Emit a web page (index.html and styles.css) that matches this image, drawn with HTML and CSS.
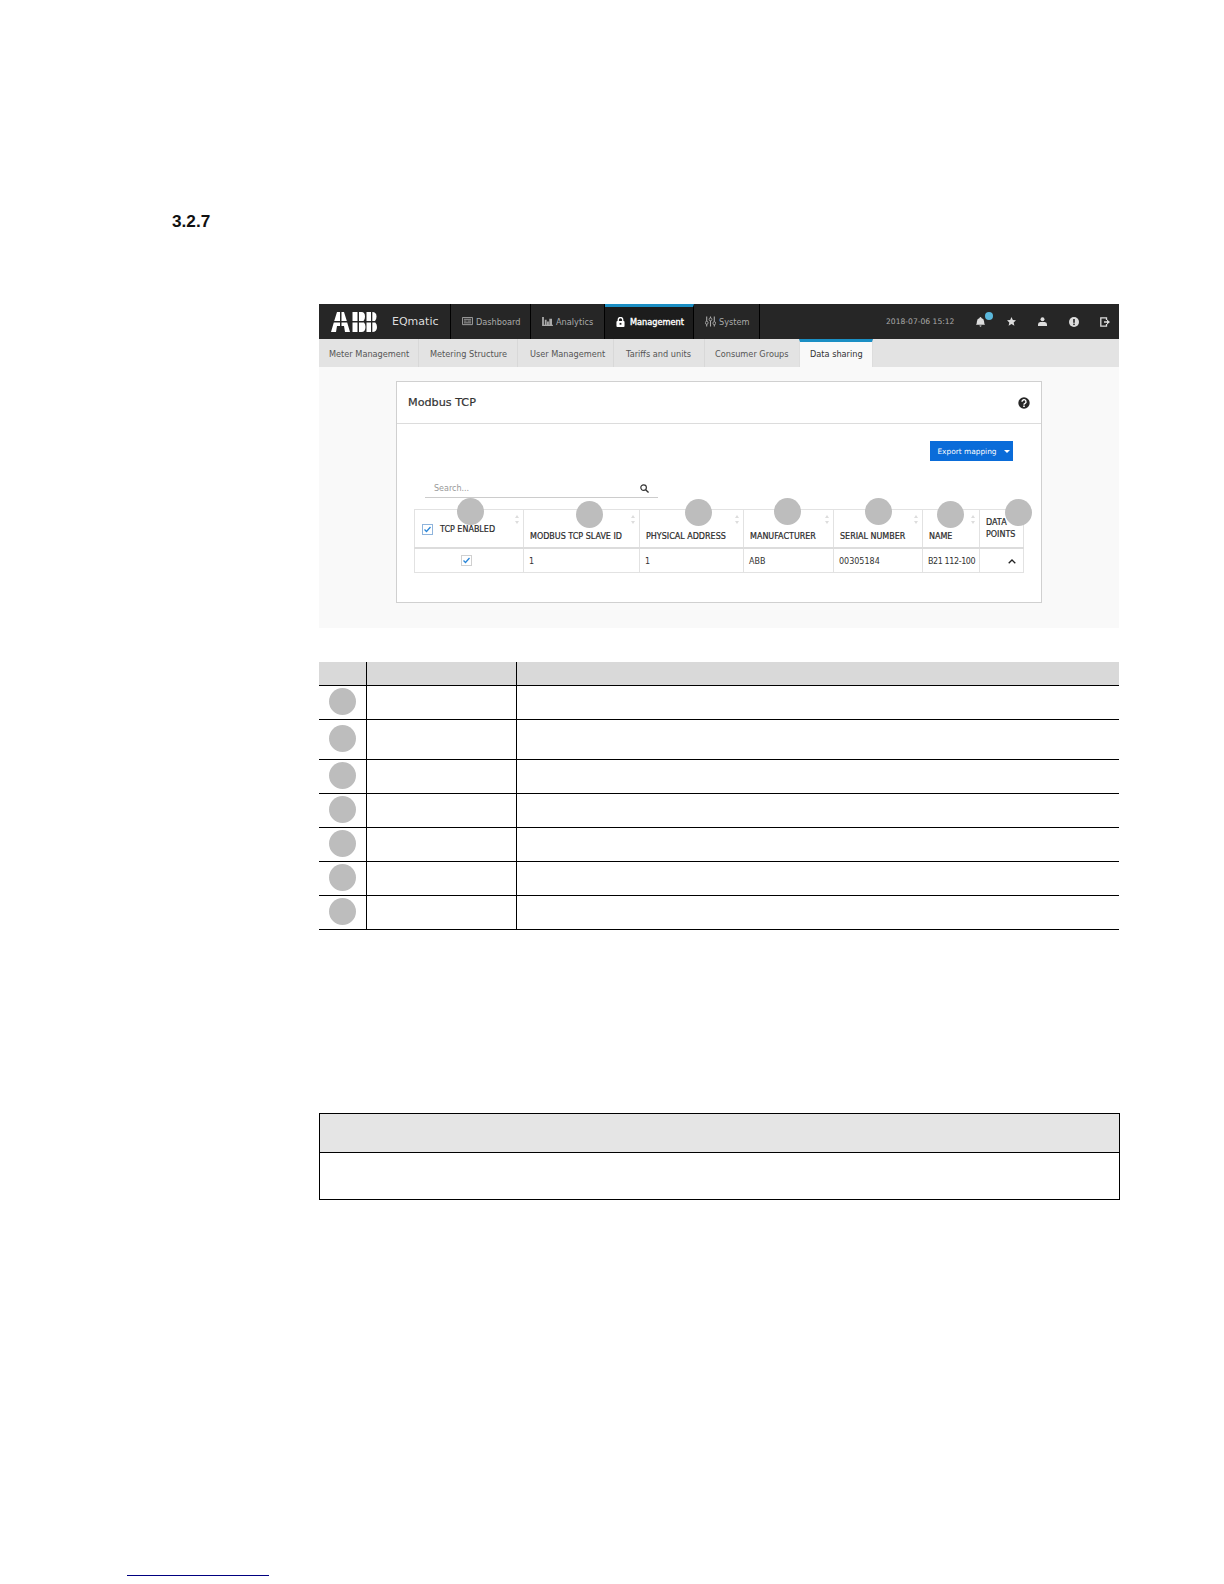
FILE: index.html
```html
<!DOCTYPE html>
<html lang="en">
<head>
<meta charset="utf-8">
<title>3.2.7 Modbus TCP</title>
<link rel="stylesheet" href="styles.css">
</head>
<body>
<div class="page">
  <h2 class="section-no">3.2.7</h2>

  <div class="screen">
    <header class="nav">
      <div class="brand">
        <svg class="logo" viewBox="0 0 46 20" width="46" height="20" aria-label="ABB logo">
          <g fill="#fff">
            <polygon points="3.200,9 6,0 9,0 9,9"/>
            <polygon points="2.800,10.500 9,10.500 9,14 6,14 5,20 0,20"/>
            <polygon points="10.500,0 13,0 15.800,9 10.500,9"/>
            <polygon points="10.500,10.500 16.200,10.500 19,20 14,20 13,14 10.500,14"/>
            <rect x="21.500" y="0" width="5" height="9"/>
            <rect x="21.500" y="10.500" width="5" height="9.500"/>
            <path d="M28 0h2.500q3.500 0 3.500 4.500 0 3-1.500 4.500H28z"/>
            <path d="M28 10.500h5q1.500 1.500 1.500 4.500 0 5-4 5H28z"/>
            <rect x="35.500" y="0" width="4.500" height="9"/>
            <rect x="35.500" y="10.500" width="4.500" height="9.500"/>
            <path d="M41.300 0q4.200 0 4.200 4.500 0 3-1.500 4.500h-2.700z"/>
            <path d="M41.300 10.500h3q1.700 1.500 1.700 4.500 0 5-4.700 5z"/>
          </g>
        </svg>
        <span class="product">EQmatic</span>
      </div>
      <a class="nav-item nav-dash">
        <svg class="nav-ico" viewBox="0 0 12 10" width="11" height="9"><path d="M.5.500h11v8h-11z" fill="none" stroke="#aaa"/><path d="M2 2.500h8M2 4.500h3M6 4.500h4M2 6.500h8" stroke="#aaa"/></svg>
        Dashboard
      </a>
      <a class="nav-item nav-ana">
        <svg class="nav-ico" viewBox="0 0 12 10" width="11" height="9"><path d="M0 0h2v10H0zM3 3h2v6H3zM5.500 5h2v4h-2zM8 2h3v7H8zM0 8.500h12V10H0z" fill="#aaa"/></svg>
        Analytics
      </a>
      <a class="nav-item nav-mgmt">
        <svg class="nav-ico" viewBox="0 0 10 11" width="9" height="10"><path d="M2.500 5V3a2.500 2.500 0 0 1 5 0v2" fill="none" stroke="#fff" stroke-width="1.500"/><rect x="0.500" y="4.500" width="9" height="6.500" rx="1" fill="#fff"/><rect x="4" y="6.500" width="2" height="2" fill="#1c1c1c"/></svg>
        Management
      </a>
      <a class="nav-item nav-sys">
        <svg class="nav-ico" viewBox="0 0 13 12" width="11" height="11"><path d="M2 0v12M6.500 0v12M11 0v12" stroke="#aaa" stroke-width="1.300"/><circle cx="2" cy="7.500" r="1.700" fill="#262626" stroke="#aaa"/><circle cx="6.500" cy="3.500" r="1.700" fill="#262626" stroke="#aaa"/><circle cx="11" cy="8" r="1.700" fill="#262626" stroke="#aaa"/></svg>
        System
      </a>
      <div class="nav-right">
        <span class="date">2018-07-06 15:12</span>
        <span class="tool tool-bell">
          <svg viewBox="0 0 10 11" width="9" height="10"><path d="M5 0a1 1 0 0 1 1 1q3 1 3 4 0 2.500 1 3.500H0q1-1 1-3.500 0-3 3-4a1 1 0 0 1 1-1zM3.800 9.500h2.400a1.200 1.200 0 0 1-2.400 0z" fill="#ddd"/></svg>
          <i class="badge"></i>
        </span>
        <span class="tool">
          <svg viewBox="0 0 10 10" width="9" height="9"><path d="M5 0l1.500 3.300 3.500.4-2.600 2.300.8 3.600L5 7.800 1.800 9.600l.8-3.600L0 3.700l3.500-.4z" fill="#ddd"/></svg>
        </span>
        <span class="tool">
          <svg viewBox="0 0 10 10" width="9" height="9"><circle cx="5" cy="2.500" r="2.200" fill="#ddd"/><path d="M0 10V8q0-2 2.500-2.500h5Q10 6 10 8v2z" fill="#ddd"/></svg>
        </span>
        <span class="tool">
          <svg viewBox="0 0 10 10" width="10" height="10"><circle cx="5" cy="5" r="5" fill="#ddd"/><rect x="4.200" y="2" width="1.600" height="3.800" fill="#262626"/><rect x="4.200" y="6.600" width="1.600" height="1.500" fill="#262626"/></svg>
        </span>
        <span class="tool">
          <svg viewBox="0 0 10 10" width="10" height="10"><path d="M6.500 3V.800H.8v8.400h5.700V7" fill="none" stroke="#ddd" stroke-width="1.300"/><path d="M4 4.200h3V2.500L10 5 7 7.500V5.800H4z" fill="#ddd"/></svg>
        </span>
      </div>
    </header>

    <nav class="tabs">
      <a class="tab tab-1">Meter Management</a>
      <a class="tab tab-2">Metering Structure</a>
      <a class="tab tab-3">User Management</a>
      <a class="tab tab-4">Tariffs and units</a>
      <a class="tab tab-5">Consumer Groups</a>
      <a class="tab tab-active">Data sharing</a>
    </nav>

    <section class="card">
      <div class="card-head">
        <h3 class="card-title">Modbus TCP</h3>
        <svg viewBox="0 0 12 12" width="12" height="12" aria-label="Help"><circle cx="6" cy="6" r="5.700" fill="#262626"/><path d="M4 4.700a2 2 0 1 1 3 1.700q-1 .5-1 1.300" fill="none" stroke="#fff" stroke-width="1.400"/><rect x="5.200" y="8.500" width="1.600" height="1.500" fill="#fff"/></svg>
      </div>
      <div class="card-actions">
        <button class="export">Export mapping <i class="caret"></i></button>
      </div>
      <div class="search">
        <span>Search...</span>
        <svg viewBox="0 0 10 10" width="9" height="9"><circle cx="4" cy="4" r="3.100" fill="none" stroke="#333" stroke-width="1.300"/><path d="M6.300 6.300L9.500 9.500" stroke="#333" stroke-width="1.500"/></svg>
      </div>
      <table class="data">
        <colgroup>
          <col class="d1"><col class="d2"><col class="d3"><col class="d4"><col class="d5"><col class="d6"><col class="d7">
        </colgroup>
        <thead>
          <tr>
            <th class="th-check">
              <span class="th-check-in">
                <svg class="cb" viewBox="0 0 11 11" width="11" height="11"><rect x=".5" y=".5" width="10" height="10" fill="#fff" stroke="#8fb4dc"/><path d="M2.500 5.500l2 2 4-4.500" fill="none" stroke="#2a86d8" stroke-width="1.300"/></svg>
                TCP ENABLED
              </span>
              <i class="sort"></i>
            </th>
            <th>MODBUS TCP SLAVE ID<i class="sort"></i></th>
            <th>PHYSICAL ADDRESS<i class="sort"></i></th>
            <th>MANUFACTURER<i class="sort"></i></th>
            <th>SERIAL NUMBER<i class="sort"></i></th>
            <th>NAME<i class="sort"></i></th>
            <th class="th-two">DATA<br>POINTS</th>
          </tr>
        </thead>
        <tbody>
          <tr>
            <td class="td-check"><svg class="cb" viewBox="0 0 11 11" width="11" height="11"><rect x=".5" y=".5" width="10" height="10" fill="#fff" stroke="#d0d0d0"/><path d="M2.500 5.500l2 2 4-4.500" fill="none" stroke="#2a86d8" stroke-width="1.300"/></svg></td>
            <td>1</td>
            <td>1</td>
            <td>ABB</td>
            <td>00305184</td>
            <td class="td-name">B21 112-100</td>
            <td class="td-chev"><svg viewBox="0 0 8 5" width="8" height="5"><path d="M.7 4.300L4 1l3.300 3.300" fill="none" stroke="#222" stroke-width="1.300"/></svg></td>
          </tr>
        </tbody>
      </table>
    </section>

    <i class="dot pin p1"></i>
    <i class="dot pin p2"></i>
    <i class="dot pin p3"></i>
    <i class="dot pin p4"></i>
    <i class="dot pin p5"></i>
    <i class="dot pin p6"></i>
    <i class="dot pin p7"></i>
  </div>

  <table class="legend">
    <colgroup><col class="l1"><col class="l2"><col></colgroup>
    <thead><tr><th></th><th></th><th></th></tr></thead>
    <tbody>
      <tr><td><i class="dot"></i></td><td></td><td></td></tr>
      <tr class="tall"><td><i class="dot"></i></td><td></td><td></td></tr>
      <tr><td><i class="dot"></i></td><td></td><td></td></tr>
      <tr><td><i class="dot"></i></td><td></td><td></td></tr>
      <tr><td><i class="dot"></i></td><td></td><td></td></tr>
      <tr><td><i class="dot"></i></td><td></td><td></td></tr>
      <tr><td><i class="dot"></i></td><td></td><td></td></tr>
    </tbody>
  </table>

  <div class="note">
    <div class="note-head"></div>
    <div class="note-body"></div>
  </div>

  <div class="foot-link"></div>
</div>
</body>
</html>
```

FILE: styles.css
```css
* { box-sizing: border-box; }
html, body { margin: 0; padding: 0; background: #fff; }
body { font-family: "DejaVu Sans", sans-serif; font-size: 8.2px; color: #333; }
.page { width: 1224px; height: 1584px; overflow: hidden; padding-top: 211px; }

.section-no {
  margin: 0 0 73px 172px;
  font: bold 17.2px/20px "Liberation Sans", sans-serif;
  color: #111;
}

.screen { position: relative; width: 800px; margin-left: 319px; background: #f9f9f9; padding-bottom: 25px; }

.nav { display: flex; height: 35px; background: #262626; color: #aaa; align-items: stretch; }
.brand { display: flex; align-items: center; width: 132px; padding-left: 12px; border-right: 1px solid #000; }
.logo { flex: none; margin-right: 15px; }
.product { font-size: 11px; color: #ddd; }
.nav-item { display: flex; align-items: center; gap: 3px; padding: 0 0 0 11px; border-right: 1px solid #000; white-space: nowrap; }
.nav-dash { width: 80px; }
.nav-ana { width: 74px; }
.nav-mgmt { width: 89px; gap: 5px; background: #1c1c1c; color: #fff; border-top: 3px solid #1b8fc4; padding-bottom: 3px; -webkit-text-stroke: 0.35px #fff; }
.nav-sys { width: 66px; }
.nav-right { flex: 1; display: flex; align-items: center; margin-right: -1px; }
.date { margin-left: 126px; margin-right: auto; font-size: 7.6px; white-space: nowrap; }
.tool { position: relative; display: flex; flex: none; width: 31px; justify-content: center; align-items: center; }
.badge { position: absolute; left: 20px; top: -5px; width: 8px; height: 8px; border-radius: 50%; background: #5bb8dc; }

.tabs { display: flex; height: 28px; background: #e3e3e3; color: #555; }
.tab { display: flex; align-items: center; padding: 1px 0 0 10px; border-right: 1px solid #d8d8d8; white-space: nowrap; }
.tab-1 { width: 100px; }
.tab-2 { width: 99px; padding-left: 11px; }
.tab-3 { width: 96px; padding-left: 12px; }
.tab-4 { width: 91px; padding-left: 12px; }
.tab-5 { width: 94px; padding-left: 10px; border-right: none; }
.tab-active {
  width: 74px; padding-left: 10px; background: #f9f9f9; color: #333;
  border-top: 3px solid #1b8fc4; border-right: 1px solid #ddd; border-left: 1px solid #ddd;
  padding-bottom: 2px;
}

.card { width: 646px; height: 222px; margin: 14px 0 0 77px; background: #fff; border: 1px solid #d0d0d0; }
.card-head { display: flex; justify-content: space-between; align-items: center; height: 42px; padding: 0 11px 0 11px; border-bottom: 1px solid #dcdcdc; }
.card-title { margin: 0; font-size: 11.2px; font-weight: normal; color: #333; -webkit-text-stroke: 0.2px #333; }
.card-actions { display: flex; justify-content: flex-end; padding: 17px 28px 0 0; }
.export { display: flex; align-items: center; justify-content: center; gap: 7px; width: 83px; height: 20px; padding: 0 0 0 4px; border: 0; background: #0a6cd9; color: #fff; font: 7.4px "DejaVu Sans", sans-serif; }
.caret { width: 0; height: 0; border: 3px solid transparent; border-top: 3px solid #fff; border-bottom: 0; }

.search { display: flex; justify-content: space-between; align-items: center; width: 233px; height: 19px; margin: 18px 0 0 28px; padding: 2px 9px 1px 9px; border-bottom: 1px solid #ccc; color: #999; font-size: 8px; }

.data { table-layout: fixed; width: 609px; margin: 11px 0 0 17px; border-collapse: collapse; background: #fff; }
.d1 { width: 109px; } .d2 { width: 116px; } .d3 { width: 104px; } .d4 { width: 90px; } .d5 { width: 89px; } .d6 { width: 57px; } .d7 { width: 44px; }
.data th { position: relative; height: 38px; padding: 0 6px 6px; text-align: left; vertical-align: bottom; font-size: 8px; font-weight: normal; color: #2a2a2a; border: 1px solid #e2e2e2; border-bottom: 2px solid #dcdcdc; white-space: nowrap; -webkit-text-stroke: 0.2px #2a2a2a; }
.data th.th-check { padding: 2px 7px 0; vertical-align: middle; }
.th-check-in { display: flex; align-items: center; gap: 7px; }
.data th.th-two { padding: 0 6px 6px; line-height: 12px; }
.data td { height: 25px; padding: 2px 5px 0; font-size: 8px; color: #333; border: 1px solid #e2e2e2; white-space: nowrap; }
.cb { display: block; flex: none; }
.data td.td-check { padding-top: 1px; }
.td-check .cb { margin: 0 auto 0 41px; }
.data td.td-name { letter-spacing: -0.4px; }
.td-chev svg { display: block; margin-left: auto; margin-right: 2px; }
.sort { position: absolute; right: 4px; top: 5px; width: 0; height: 0; border: 2px solid transparent; border-bottom: 3px solid #ddd; border-top: 0; }
.sort::after { content: ""; position: absolute; left: -2px; top: 6px; border: 2px solid transparent; border-top: 3px solid #ddd; border-bottom: 0; }

.dot { display: block; width: 27px; height: 27px; border-radius: 50%; background: #bdbdbd; }
.pin { position: absolute; }
.p1 { left: 138px; top: 194px; }
.p2 { left: 257px; top: 197px; }
.p3 { left: 366px; top: 195px; }
.p4 { left: 455px; top: 194px; }
.p5 { left: 546px; top: 194px; }
.p6 { left: 618px; top: 197px; }
.p7 { left: 686px; top: 195px; }

.legend { table-layout: fixed; width: 800px; margin: 34px 0 0 319px; border-collapse: separate; border-spacing: 0; }
.l1 { width: 48px; } .l2 { width: 150px; }
.legend th { height: 24px; padding: 0; background: #d9d9d9; border-bottom: 1px solid #000; border-right: 1px solid #000; }
.legend td { height: 34px; padding: 0; border-bottom: 1px solid #000; border-right: 1px solid #000; }
.legend tr.tall td { height: 40px; }
.legend th:last-child, .legend td:last-child { border-right: 0; }
.legend .dot { margin: -2px auto 0 10px; }

.note { width: 801px; margin: 183px 0 0 319px; border: 1px solid #000; }
.note-head { height: 39px; background: #e5e5e5; border-bottom: 1px solid #000; }
.note-body { height: 46px; }

.foot-link { width: 142px; height: 1px; margin: 375px 0 0 127px; background: #000080; }
```
